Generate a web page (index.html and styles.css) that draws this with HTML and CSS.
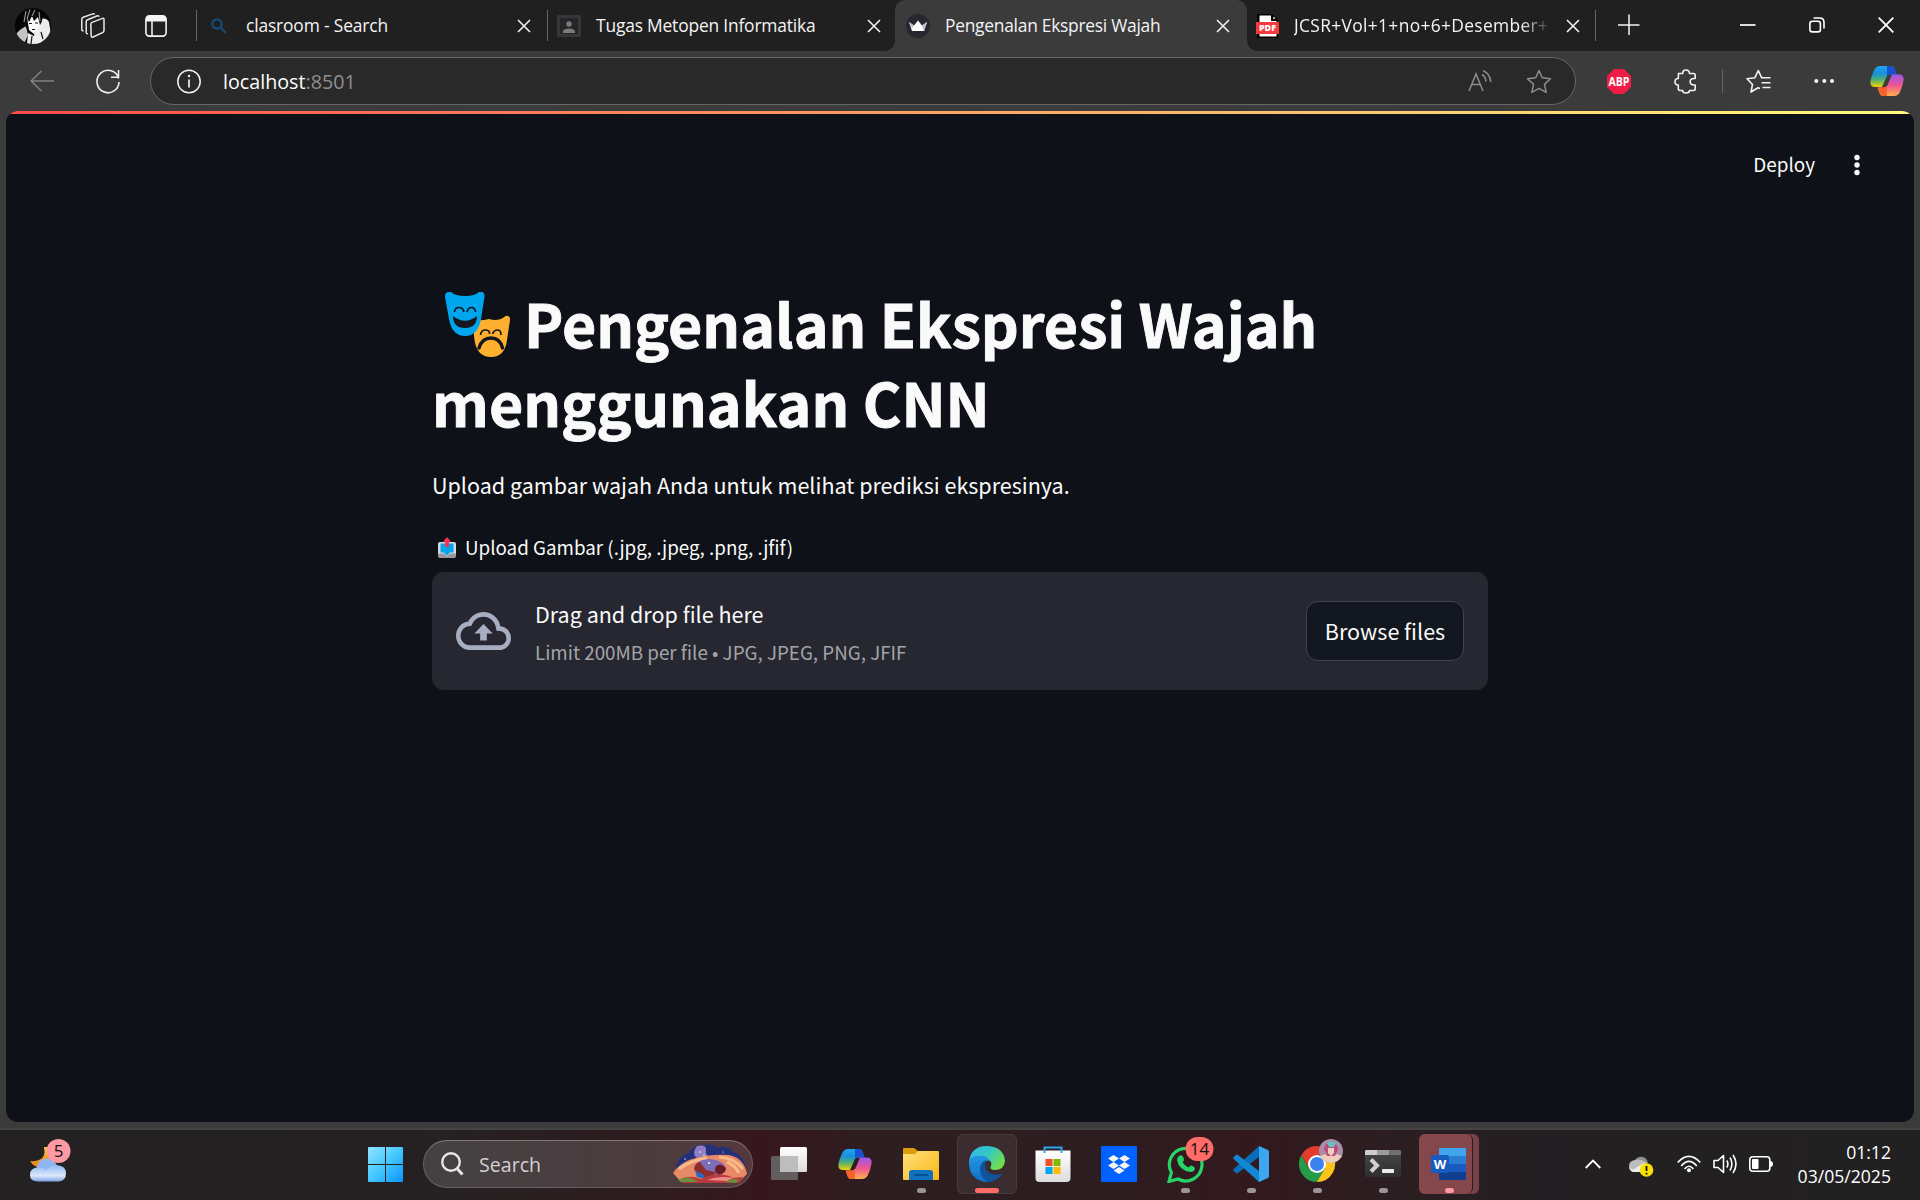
FILE: index.html
```html
<!DOCTYPE html>
<html lang="id">
<head>
<meta charset="utf-8">
<title>Pengenalan Ekspresi Wajah</title>
<link rel="stylesheet" href="styles.css">
</head>
<body>
<svg class="defs" aria-hidden="true">
  <defs>
    <linearGradient id="cpA" x1="0" y1="0" x2="0" y2="1"><stop offset="0" stop-color="#1fa3f0"/><stop offset=".35" stop-color="#1592dc"/><stop offset=".65" stop-color="#4fb070"/><stop offset="1" stop-color="#f5d000"/></linearGradient>
    <linearGradient id="cpB" x1="0" y1="0" x2="0" y2="1"><stop offset="0" stop-color="#9a57f0"/><stop offset=".5" stop-color="#ee5590"/><stop offset="1" stop-color="#ffb14a"/></linearGradient>
    <linearGradient id="win" x1="0" y1="0" x2="1" y2="1"><stop offset="0" stop-color="#8fe3ff"/><stop offset=".5" stop-color="#45c8ff"/><stop offset="1" stop-color="#0a93ff"/></linearGradient>
    <linearGradient id="cloud" x1="0" y1="0" x2="0" y2="1"><stop offset="0" stop-color="#8fb8f4"/><stop offset=".65" stop-color="#dbe8fb"/><stop offset="1" stop-color="#7ba3e4"/></linearGradient>
    <linearGradient id="moon" x1="0" y1="0" x2="0" y2="1"><stop offset="0" stop-color="#f9c83a"/><stop offset="1" stop-color="#ec7b12"/></linearGradient>
    <linearGradient id="fold" x1="0" y1="0" x2="1" y2="1"><stop offset="0" stop-color="#ffe07a"/><stop offset="1" stop-color="#f8b816"/></linearGradient>
    <linearGradient id="edgeTop" x1="0" y1="0" x2="1" y2=".6"><stop offset="0" stop-color="#35b5f0"/><stop offset=".5" stop-color="#35c6c8"/><stop offset="1" stop-color="#6fe04a"/></linearGradient>
    <linearGradient id="edgeL" x1="0" y1="0" x2="0" y2="1"><stop offset="0" stop-color="#2496e6"/><stop offset="1" stop-color="#0f6fc4"/></linearGradient>
    <linearGradient id="tv" x1="0" y1="0" x2="0" y2="1"><stop offset="0" stop-color="#fff"/><stop offset="1" stop-color="#dcdcdc"/></linearGradient>
    <linearGradient id="term" x1="0" y1="0" x2="0" y2="1"><stop offset="0" stop-color="#484848"/><stop offset="1" stop-color="#2f2f2f"/></linearGradient>
    <symbol id="x" viewBox="0 0 14 14"><path d="M1 1 13 13M13 1 1 13" fill="none" stroke="currentColor" stroke-width="1.6"/></symbol>
    <symbol id="copilot" viewBox="0 0 34 30">
      <path d="M10 0H20.500Q23.500 0 24.500 3L26.500 8.500H20Q17 8.500 16 12L12 21H5Q0 21 .4 15.500Q1 11 4 4.500Q6 0 10 0Z" fill="url(#cpA)"/>
      <path d="M17 0H20.500Q23.500 0 24.500 3L26.500 8.500H20Q18 8.500 17 10.500Z" fill="#1750d0"/>
      <path d="M24 30H13.500Q10.500 30 9.500 27L7.500 21.500H14Q17 21.500 18 18L22 8.500H29Q34 8.500 33.600 14Q33 19 30 26Q28 30 24 30Z" fill="url(#cpB)"/>
      <path d="M17 30H13.500Q10.500 30 9.500 27L7.500 21.500H14Q16 21.500 17 19.500Z" fill="#f5622c"/>
    </symbol>
  </defs>
</svg>

<header class="tabbar">
  <svg class="avatar" width="36" height="36" viewBox="0 0 36 36">
    <clipPath id="av"><circle cx="18" cy="18" r="18"/></clipPath>
    <g clip-path="url(#av)">
      <rect width="36" height="36" fill="#050505"/>
      <path d="M23 12Q31 8 34 14L36 26 30 36H22L19 26Z" fill="#ececec"/>
      <path d="M0 27Q5 21 11 18L13 27 9 36H3Z" fill="#c4c4c4"/>
      <path d="M12 9 25 8 24 19 19 26 14 22Z" fill="#fafafa"/>
      <path d="M13 25 19 28 24 22 27 36H12Z" fill="#ededed"/>
      <path d="M8 5Q17-3 26 6Q29 12 25 17L23 9 19 13 17 8 14 14 12 10 12 21Q7 14 8 5Z" fill="#0a0a0a"/>
      <path d="M11 3 9 14M15 1.500 12 11M20 2 17 8M24 4 25 13" stroke="#aaa" stroke-width="1"/>
      <path d="M14 15.500H17M20 15H23M17 21.500H20M17 28 16 36M26 24 28 31" stroke="#111" stroke-width="1.200"/>
    </g>
  </svg>
  <svg class="workspaces" width="26" height="26" viewBox="0 0 26 26" fill="none" stroke="#e8e8e8" stroke-width="1.500" stroke-linejoin="round">
    <path d="M10.800 11.200Q10.800 9.800 12 9.400L22.500 5.400Q24 4.900 24 6.500V17.500Q24 19 22.600 19.600L13 24Q11.400 24.700 11.200 23Z"/>
    <path d="M8 20.800Q6.200 21 6.200 19.300V8.800Q6.200 7.200 7.500 6.700L17.500 2.800Q18.700 2.400 19.200 3.800"/>
    <path d="M3.600 17.800Q1.800 18 1.800 16.400V6.300Q1.800 4.800 3.200 4.200L12.800.9Q14 .5 14.600 1.500"/>
  </svg>
  <svg class="verttabs" width="22" height="22" viewBox="0 0 22 22"><rect x=".9" y=".9" width="20.200" height="20.200" rx="3.500" fill="none" stroke="#f4f4f4" stroke-width="1.600"/><path d="M1 6.500V4Q1 1 4 1H18Q21 1 21 4V6.500Z" fill="#f4f4f4"/><path d="M7 6V21" stroke="#f4f4f4" stroke-width="1.500"/></svg>
  <i class="sep"></i>
  <div class="tab tab-a">
    <svg width="16" height="16" viewBox="0 0 16 16" fill="none" stroke="#174a75" stroke-width="2.200"><circle cx="6" cy="6" r="4.700"/><path d="M9.500 9.500 15 15"/></svg>
    <span class="t t1">clasroom - Search</span>
    <svg class="close" width="14" height="14"><use href="#x"/></svg>
  </div>
  <i class="sep"></i>
  <div class="tab tab-b">
    <svg width="24" height="22" viewBox="0 0 24 22"><rect width="24" height="22" rx="2" fill="#35373a"/><rect x="3" y="3" width="18" height="16" fill="#242628"/><circle cx="12" cy="9" r="2.700" fill="#7b7b7b"/><path d="M6 18V16Q7 13.500 12 13.500T18 16V18Z" fill="#7b7b7b"/></svg>
    <span class="t t2">Tugas Metopen Informatika</span>
    <svg class="close" width="14" height="14"><use href="#x"/></svg>
  </div>
  <div class="tab tab-active">
    <svg width="24" height="24" viewBox="0 0 24 24"><circle cx="12" cy="12" r="12" fill="#262730"/><path d="M3 8 8 11.500 12 6.500 16 11.500 21 8 18 17H6Z" fill="#fff"/><path d="M21 8 16 11.500 18 17ZM3 8 8 11.500 6 14Z" fill="#b9b9c0"/></svg>
    <span class="t t3">Pengenalan Ekspresi Wajah</span>
    <svg class="close" width="14" height="14"><use href="#x"/></svg>
  </div>
  <div class="tab tab-d">
    <svg width="23" height="24" viewBox="0 0 23 24"><path d="M1 0H16L22 6V24H1Z" fill="#000"/><path d="M3.500 1.500H15V7H20.500V22.500H3.500Z" fill="#fff"/><circle cx="18" cy="4" r="1" fill="#ddd"/><rect y="8" width="23" height="12" fill="#f5393c"/><text x="11.500" y="17.200" class="pdf" textLength="17">PDF</text></svg>
    <span class="t t4">JCSR+Vol+1+no+6+Desember+</span>
    <svg class="close" width="14" height="14"><use href="#x"/></svg>
  </div>
  <i class="sep"></i>
  <svg class="plus" width="22" height="22" viewBox="0 0 22 22"><path d="M0 11H21.500M11 .5V21" stroke="#f2f2f2" stroke-width="1.500"/></svg>
  <div class="winctl">
    <svg width="16" height="16" viewBox="0 0 16 16"><path d="M0 8H15.500" stroke="#fff" stroke-width="1.700"/></svg>
    <svg width="16" height="16" viewBox="0 0 16 16" fill="none" stroke="#fff" stroke-width="1.600"><rect x=".9" y="4.200" width="10.500" height="10.700" rx="2.500"/><path d="M4.500 1H10.500Q15 1 15 5.500V11.500"/></svg>
    <svg width="16" height="16" viewBox="0 0 16 16"><path d="M.7.7 15.300 15.300M15.300.7.7 15.300" stroke="#fff" stroke-width="1.800"/></svg>
  </div>
</header>

<nav class="toolbar">
  <svg class="back" width="24" height="22" viewBox="0 0 24 22" fill="none" stroke="#838383" stroke-width="1.500"><path d="M24 11H1M11.500 1 1 11 11.500 21"/></svg>
  <svg class="reload" width="24" height="25" viewBox="0 0 24 25" fill="none" stroke="#f0f0f0" stroke-width="1.600"><path d="M22.600 9.500A11 11.200 0 1 0 23 13M22.500 1V8.200H15"/></svg>
  <div class="omnibox">
    <svg class="info" width="24" height="25" viewBox="0 0 24 25"><circle cx="12" cy="12.500" r="11.200" fill="none" stroke="#f2f2f2" stroke-width="1.500"/><path d="M12 10.500V18.500" stroke="#f2f2f2" stroke-width="1.700"/><circle cx="12" cy="7" r="1.200" fill="#f2f2f2"/></svg>
    <span class="url"><span class="host">localhost</span><span class="port">:8501</span></span>
    <svg class="read" width="24" height="22" viewBox="0 0 24 22" fill="none" stroke="#8d8d8d" stroke-width="1.500"><path d="M1 21 8 4 15 21M3.700 14.500H12.300M14 4.500Q17.500 6.500 18 11.500M15 .8Q22 3.500 22.800 12"/></svg>
    <svg class="star" width="26" height="25" viewBox="0 0 26 25" fill="none" stroke="#8d8d8d" stroke-width="1.500" stroke-linejoin="round"><path d="M13 1.500 16.300 8.800 24.500 9.700 18.500 15.300 20.200 23.300 13 19.300 5.800 23.300 7.500 15.300 1.500 9.700 9.700 8.800Z"/></svg>
  </div>
  <svg class="abp" width="24" height="25" viewBox="0 0 24 25"><path d="M7 0H17L24 7V18L17 25H7L0 18V7Z" fill="#ee1c46"/><text x="12" y="16.800" textLength="21" lengthAdjust="spacingAndGlyphs">ABP</text></svg>
  <svg class="puzzle" width="24" height="25" viewBox="0 0 24 25" fill="none" stroke="#f2f2f2" stroke-width="1.600" stroke-linejoin="round"><path d="M4.500 4.500H8.700Q8.700 1 12 1T15.500 4.500H19.500Q21.200 4.500 21.200 6.200V9.500H20Q16.200 9.500 16.200 12.700T20 16H21.200V19.800Q21.200 21.500 19.500 21.500H15.500Q15.500 24 12 24T8.700 21.500H6Q4.300 21.500 4.300 19.800V16Q1 16 1 12.700T4.300 9.500Z"/></svg>
  <i class="tsep"></i>
  <svg class="favs" width="25" height="25" viewBox="0 0 25 25" fill="none" stroke="#f2f2f2" stroke-width="1.600" stroke-linejoin="round"><path d="M14 19.600 12 18.800 5 23 6.500 15.500 1 9.800 8.800 8.800 12.300 1.500 15.700 8.800H24.500M15.500 13.700H24.500M16.500 18.500H24.500"/></svg>
  <svg class="more" width="20" height="6" viewBox="0 0 20 6" fill="#f4f4f4"><circle cx="2.300" cy="3" r="2"/><circle cx="10.300" cy="3" r="2"/><circle cx="18" cy="3" r="2"/></svg>
  <svg class="cp" width="34" height="30"><use href="#copilot"/></svg>
</nav>

<div class="frame">
  <main class="page">
    <div class="rainbow"></div>
    <div class="apphead">
      <span class="deploy">Deploy</span>
      <svg width="6" height="22" viewBox="0 0 6 22" fill="#fafafa"><circle cx="3" cy="3.500" r="2.700"/><circle cx="3" cy="11" r="2.700"/><circle cx="3" cy="18.500" r="2.700"/></svg>
    </div>
    <section class="block">
      <h1>
        <span class="line"><svg class="masks" width="66" height="66" viewBox="0 0 66 66">
          <path d="M44 27Q54 30 60.500 24Q65.500 23 65 28L62 48Q60 65 46 65T29.500 48L27 27Q34 29.500 44 27Z" fill="#ffb02e"/>
          <path d="M35.500 43Q36 38 40.500 38T44.500 42M47.500 42Q49 38 52.500 38T56 43" fill="none" stroke="#14171f" stroke-width="1.700"/>
          <path d="M34 56Q37 46 46 46T57.500 56" fill="none" stroke="#14171f" stroke-width="3.400" stroke-linecap="round"/>
          <path d="M0 5Q0-1 6 0Q10 4 20 4T34 0Q40-1 39.500 5L36 27Q33 44 20 44T4 27Z" fill="#00a6ed"/>
          <path d="M9.500 20Q10 15.500 14 15.500T19 20M22 20Q23 15.500 26.500 15.500T30.500 20" fill="none" stroke="#14171f" stroke-width="1.700"/>
          <path d="M8 24Q20 33.500 32 24Q32 36 20 36T8 24Z" fill="#14171f"/>
        </svg><span>Pengenalan Ekspresi Wajah</span></span>
        <span class="line">menggunakan CNN</span>
      </h1>
      <p class="lead">Upload gambar wajah Anda untuk melihat prediksi ekspresinya.</p>
      <div class="label">
        <svg width="18" height="21" viewBox="0 0 18 21"><path d="M0 7Q0 5 2 5H16Q18 5 18 7V18Q18 21 15 21H3Q0 21 0 18Z" fill="#d9d9dc"/><path d="M0 16.500H6L9 19 12 16.500H18V18Q18 21 15 21H3Q0 21 0 18Z" fill="#98989c"/><path d="M2.500 6.500H15.500V15.500H12L9 18.500 6 15.500H2.500Z" fill="#00a6ed"/><path d="M9 0 13 4.500H11V10H7V4.500H5Z" fill="#f8314f"/></svg>
        <span>Upload Gambar (.jpg, .jpeg, .png, .jfif)</span>
      </div>
      <div class="dropzone">
        <svg class="cloud" width="56" height="38" viewBox="0 4 24 16" preserveAspectRatio="none" fill="#a8aec2"><path d="M19.350 10.040A7.490 7.490 0 0 0 12 4C9.110 4 6.600 5.640 5.350 8.040A5.994 5.994 0 0 0 0 14c0 3.310 2.690 6 6 6h13c2.760 0 5-2.240 5-5 0-2.640-2.050-4.780-4.650-4.960zM19 18H6c-2.210 0-4-1.790-4-4 0-2.050 1.530-3.760 3.560-3.970l1.070-.110.5-.950A5.469 5.469 0 0 1 12 6c2.620 0 4.880 1.860 5.390 4.430l.3 1.500 1.530.110A2.980 2.980 0 0 1 22 15c0 1.650-1.350 3-3 3zM8 13h2.550v3h2.900v-3H16l-4-4z"/></svg>
        <div class="dz">
          <span class="dz1">Drag and drop file here</span>
          <span class="dz2">Limit 200MB per file • JPG, JPEG, PNG, JFIF</span>
        </div>
        <button class="browse">Browse files</button>
      </div>
    </section>
  </main>
</div>

<footer class="taskbar">
  <svg class="weather" width="44" height="46" viewBox="0 0 44 46">
    <path d="M14 8Q16 18 10 20.500Q5 23 0 22Q4 29 12 29L24 22 22 8Z" fill="url(#moon)"/>
    <circle cx="17" cy="30" r="10.500" fill="#8db5f2"/><path d="M0 36Q0 28.500 8 28.500Q13 28 16 31Q20 26 27 26Q36 27 36 34Q36 42.500 28 42.500H8Q0 42.500 0 36Z" fill="url(#cloud)"/>
    <circle cx="28.500" cy="12" r="12" fill="#ff99a4"/><text x="28.500" y="17.700" class="badge">5</text>
  </svg>
  <svg class="start" width="35" height="35" viewBox="0 0 35 35"><path d="M1 0H17V17H0V1Q0 0 1 0ZM18 0H34Q35 0 35 1V17H18ZM0 18H17V35H1Q0 35 0 34ZM18 18H35V34Q35 35 34 35H18Z" fill="url(#win)"/></svg>
  <div class="search">
    <svg class="glass" width="23" height="24" viewBox="0 0 23 24" fill="none" stroke="#e6e6e6" stroke-width="2.400"><circle cx="10" cy="10" r="8.800"/><path d="M16 16.500 21.500 22.500" stroke-width="3"/></svg>
    <span class="ms">Search</span>
    <svg class="art" width="74" height="40" viewBox="0 0 74 40">
      <path d="M3 25Q4 12 16 9Q20 1 31 1Q40-1 45 4Q56 1 60 8Q71 11 73 26Z" fill="#24307c"/>
      <path d="M24 2Q34 0 33 7Q32 11 38 13L24 14Q18 10 24 2Z" fill="#8f7cc4"/>
      <path d="M0 29Q6 20 16 16Q34 10 56 11Q71 14 74 30L66 38H8Z" fill="#e88a66"/>
      <path d="M6 25Q18 16 34 14M46 13Q62 14 70 25M54 18Q62 21 66 29" stroke="#f8bb8a" stroke-width="3" fill="none"/>
      <path d="M21 25Q22 16 36 15Q52 16 53 26Q50 32 36 31Q25 32 21 25Z" fill="#7d6cb8"/>
      <path d="M21 25Q22 19 27 18L33 26 43 28 40 32 28 34Z" fill="#8f2f2c"/>
      <path d="M43 22Q48 18 53 24Q53 29 46 31Q40 28 43 22Z" fill="#6b1a24"/>
      <path d="M22 27 30 30 33 35 24 33Z" fill="#2c68c0"/>
      <path d="M6 36Q16 30 28 35Q46 26 60 34L70 33 66 39H10Z" fill="#b93a3e"/><path d="M34 36Q46 31 60 34L54 37Z" fill="#ef8c88"/>
      <path d="M5 36Q14 30 25 38H8ZM52 38Q58 33 66 36L62 39Z" fill="#6d8f38"/>
      <g fill="#fff"><circle cx="27" cy="8" r=".8"/><circle cx="36" cy="19" r=".9"/><circle cx="50" cy="8" r=".6"/><circle cx="12" cy="15" r=".7"/><circle cx="31" cy="11" r=".7"/></g>
    </svg>
  </div>
  <div class="apps">
    <div class="app"><svg width="36" height="36" viewBox="0 0 36 36"><rect x="9" y="1" width="27" height="25" rx="1.500" fill="url(#tv)"/><rect y="10" width="27" height="24" rx="1.500" fill="#6c6c6c" opacity=".82"/><path d="M9 10H27V26H9Z" fill="#bdbdbd"/></svg></div>
    <div class="app"><svg width="34" height="30"><use href="#copilot"/></svg></div>
    <div class="app"><svg width="36" height="34" viewBox="0 0 36 34"><path d="M0 2Q0 1 1 1H11L15 4V8H0Z" fill="#dd9d0b"/><path d="M0 7H12L15 4H35Q36 4 36 5V32Q36 33 35 33H1Q0 33 0 32Z" fill="url(#fold)"/><path d="M6 33V26Q6 23 9 23H27Q30 23 30 26V33Z" fill="#0f72c0"/><path d="M11 28H25" stroke="#0a4f92" stroke-width="2"/></svg><i></i></div>
    <div class="app on"><svg width="36" height="36" viewBox="0 0 36 36">
      <path d="M0 17Q1 0 18 0Q35 1 36 15Q35 24 26 24Q21 24 21.500 21Q24 17 20 14Q14 9 6 12Z" fill="url(#edgeTop)"/>
      <path d="M0 19Q-.500 10 9 10Q18 9 21 15Q15 14 14 20Q14 28 23 35Q18 37 12 35Q1 31 0 19Z" fill="url(#edgeL)"/>
      <path d="M17 14Q10 17 11 25Q13 34 20 36Q29 35 33.500 27Q28 30 23 28Q14 25 17 14Z" fill="#10539c"/>
      </svg><i></i></div>
    <div class="app"><svg width="36" height="36" viewBox="0 0 36 36"><path d="M.500 4.500H35.500V32Q35.500 36 31.500 36H4.500Q.500 36 .500 32Z" fill="url(#tv)"/><path d="M9.500 7V1.500H26.500V7" fill="none" stroke="#28a8ea" stroke-width="2"/><path d="M10.500 13H17.500V20H10.500Z" fill="#f25022"/><path d="M18.500 13H25.500V20H18.500Z" fill="#7fba00"/><path d="M10.500 21H17.500V28H10.500Z" fill="#00a4ef"/><path d="M18.500 21H25.500V28H18.500Z" fill="#ffb900"/></svg></div>
    <div class="app"><svg width="36" height="36" viewBox="0 0 36 36"><rect width="36" height="36" fill="#0061fe"/><path d="M12.500 9 18 12.500 12.500 16 7 12.500ZM23.500 9 29 12.500 23.500 16 18 12.500ZM12.500 16 18 19.500 12.500 23 7 19.500ZM23.500 16 29 19.500 23.500 23 18 19.500ZM18 21 23.500 24.500 18 28 12.500 24.500Z" fill="#f7f5f2"/></svg></div>
    <div class="app"><svg class="wa" width="48" height="46" viewBox="0 0 48 46"><path d="M2 44.500 4.400 35.500A16.300 16.300 0 1 1 11 42Z" fill="none" stroke="#25d366" stroke-width="3.200"/><path d="M12 19Q14.500 17 16.200 20L17 22.500Q17 24 15.500 25Q17.500 29 21.500 30.500L23.500 28.500Q26 28 28 31Q27.500 35 23.500 35Q12 33.500 10 23Q10 20.500 12 19Z" fill="#25d366"/><rect x="18.500" y="0" width="28" height="24" rx="12" fill="#ff6b66"/><text x="32.500" y="17.800" class="badge">14</text></svg><i></i></div>
    <div class="app"><svg width="36" height="36" viewBox="0 0 36 36"><path d="M26 0 35 4Q36 4.500 36 6V30Q36 31.500 35 32L26 36Z" fill="#3aa7ee"/><path d="M26 0V11L5 27Q4 28 3 27L.7 25Q-.500 24 .7 23Z" fill="#0a6db8"/><path d="M26 36V25L5 9Q4 8 3 9L.7 11Q-.500 12 .7 13Z" fill="#1287d4"/></svg><i></i></div>
    <div class="app"><svg class="chrome" width="44" height="43" viewBox="0 0 44 43">
      <path d="M2.400 16A18 18 0 0 0 18 43L26 29.500 18 25 10.200 29.500Z" fill="#259a48"/><path d="M33.600 16A18 18 0 0 1 18 43L25.800 29.500V16Z" fill="#fcc31a"/><path d="M2.400 16A18 18 0 0 1 33.600 16H18L10.300 29.600Z" fill="#e33b2e"/>
      <circle cx="18" cy="25" r="9" fill="#fff"/><circle cx="18" cy="25" r="7" fill="#3b82f0"/>
      <circle cx="32" cy="12" r="12" fill="#a88fa8"/><path d="M21 17Q32 12 43 17Q38 24 32 24T21 17Z" fill="#f0cdbb"/><path d="M25 10Q26 3 32 3T39 10L36 17H28Z" fill="#c04a7c"/><path d="M29 9H35V14L32 17 29 14Z" fill="#f0cfc0"/><path d="M28 4 30 8H35L37 4Q32 1 28 4Z" fill="#63c2c2"/></svg><i></i></div>
    <div class="app"><svg width="36" height="28" viewBox="0 0 36 28"><rect width="36" height="27" rx="1.500" fill="url(#term)"/><path d="M1 0H12V5H0V1Z" fill="#cfcfcf"/><path d="M12 0H24V5H12Z" fill="#9c9c9c"/><path d="M24 0H35L36 1V5H24Z" fill="#707070"/><path d="M6 9.500 12 15.500 6 21.500" fill="none" stroke="#d0d0d0" stroke-width="4"/><rect x="17" y="19" width="12" height="4" rx=".7" fill="#ececec"/></svg><i></i></div>
    <div class="app word"><svg width="36" height="32" viewBox="0 0 36 32"><path d="M8 1Q8 0 9 0H35V8H8Z" fill="#41a5ee"/><path d="M8 8H35V16H8Z" fill="#2b7cd3"/><path d="M8 16H35V24H8Z" fill="#185abd"/><path d="M8 24H35V32H9Q8 32 8 31Z" fill="#103f91"/><rect y="7" width="18" height="18" rx="1.500" fill="#185abd"/><text x="9" y="20.500" class="w">W</text></svg><i></i></div>
  </div>
  <div class="tray">
    <svg class="chev" width="16" height="10" viewBox="0 0 16 10" fill="none" stroke="#fff" stroke-width="1.800"><path d="M.7 9 8 1.500 15.300 9"/></svg>
    <svg class="onedrive" width="25" height="22" viewBox="0 0 25 22"><path d="M6 5Q9 1 14 2Q18 3 19 8L8 15Z" fill="#8f8f8f"/><path d="M6 5Q0 6 0 11T5 17H12L18 8Q12 3 6 5Z" fill="#bdbdbd"/><path d="M0 12Q3 17 8 12L15 8 14 17H5Q1 17 0 12Z" fill="#ededed"/><circle cx="17.500" cy="15" r="6.800" fill="#fbe100"/><path d="M17.500 11V16M17.500 17.700V19.500" stroke="#111" stroke-width="1.800"/></svg>
    <svg class="wifi" width="24" height="18" viewBox="0 0 24 18" fill="none" stroke="#fff" stroke-width="1.700"><path d="M.7 7.500Q12-4.800 23.300 7.500M4.200 11Q12 1.800 19.800 11M7.600 14Q12 8.500 16.400 14"/><circle cx="12" cy="15.300" r="2" fill="#fff" stroke="none"/></svg>
    <svg class="vol" width="25" height="20" viewBox="0 0 25 20" fill="none" stroke="#fff" stroke-width="1.600" stroke-linejoin="round"><path d="M1 6.500H5L10.500 1.500V18.500L5 13.500H1ZM13.800 6.500Q16 10 13.800 13.500M17 3.500Q20.800 10 17 16.500M20 1Q26 10 20 19"/></svg>
    <svg class="bat" width="25" height="16" viewBox="0 0 25 16"><rect x=".8" y=".8" width="20" height="14.400" rx="3" fill="none" stroke="#fff" stroke-width="1.600"/><rect x="3" y="3" width="6.500" height="10" rx="1" fill="#fff"/><path d="M21 5Q24 5 24 8T21 11Z" fill="#fff"/></svg>
    <div class="clock"><span>01:12</span><span>03/05/2025</span></div>
  </div>
</footer>
</body>
</html>
```
FILE: styles.css
```css
* { box-sizing: border-box; }
body {
  margin: 0; width: 1920px; height: 1200px; overflow: hidden;
  display: flex; flex-direction: column;
  background: #3b3b3b; color: #fff;
  font-family: "Open Sans", "Noto Sans", sans-serif;
}
svg { display: block; flex: none; }
.defs { position: absolute; width: 0; height: 0; }

/* tab strip */
.tabbar { height: 51px; flex: none; display: flex; align-items: center; background: #202020; }
.avatar { margin-left: 15px; }
.workspaces { margin-left: 29px; }
.verttabs { margin-left: 39px; }
.verttabs + .sep { margin-left: 29px; }
.sep { width: 1px; height: 31px; background: #666; flex: none; }
.tab { height: 51px; display: flex; align-items: center; flex: none; }
.tab-a { width: 350px; padding: 0 16px 0 14px; }
.tab-b { width: 347px; padding: 0 14px 0 9px; }
.tab-active { width: 352px; padding: 0 17px 0 11px; background: #3b3b3b; border-radius: 10px 10px 0 0; position: relative; }
.tab-active::before, .tab-active::after { content: ""; position: absolute; bottom: 0; width: 10px; height: 10px; }
.tab-active::before { left: -10px; background: radial-gradient(circle at 0 0, transparent 9.5px, #3b3b3b 10px); }
.tab-active::after { right: -10px; background: radial-gradient(circle at 100% 0, transparent 9.5px, #3b3b3b 10px); }
.tab-d { width: 348px; padding: 0 15px 0 9px; }
.t { font-size: 17.400px; line-height: 24px; padding-bottom: 1px; white-space: nowrap; color: #f4f4f4; }
.tab .close { margin-left: auto; color: #f0f0f0; }
.t1 { margin-left: 19px; letter-spacing: -.150px; }
.t2 { margin-left: 15px; letter-spacing: -.180px; }
.t3 { margin-left: 15px; letter-spacing: -.260px; }
.t4 { margin-left: 15px; width: 258px; letter-spacing: .340px; -webkit-mask-image: linear-gradient(90deg, #000 88%, transparent); mask-image: linear-gradient(90deg, #000 88%, transparent); }
.pdf { font: 800 9px "Open Sans", sans-serif; fill: #fff; text-anchor: middle; }
.plus { margin: 0 0 2px 22px; }
.winctl { margin: 0 0 1px 100px; display: flex; gap: 53px; align-items: center; }

/* address bar */
.toolbar { height: 60px; flex: none; display: flex; align-items: center; background: #3b3b3b; }
.back { margin-left: 30px; }
.reload { margin-left: 42px; }
.omnibox { margin-left: 30px; width: 1426px; height: 48px; display: flex; align-items: center; background: #292929; border: 1px solid #666; border-radius: 24px; }
.info { margin-left: 26px; }
.url { margin-left: 22px; flex: 1; font-size: 19.700px; line-height: 26px; padding-top: 1px; }
.port { color: #8f8f8f; }
.read { margin-right: 34px; }
.star { margin-right: 23px; }
.abp { margin-left: 31px; }
.abp text { font: 700 11.500px "Open Sans", sans-serif; fill: #fff; text-anchor: middle; }
.puzzle { margin-left: 43px; }
.tsep { margin-left: 24px; width: 1px; height: 24px; background: #666; }
.favs { margin-left: 23px; }
.more { margin-left: 43px; }
.cp { margin-left: 36px; }

/* page */
.frame { height: 1017px; flex: none; padding: 0 6px 6px; background: #3b3b3b; }
.page { height: 1011px; overflow: hidden; border-radius: 12px; background: #0e1117; color: #fafafa; font-family: "Noto Sans CJK JP", sans-serif; }
.rainbow { height: 3px; background: linear-gradient(90deg, #ff4b4b, #fffd80); }
.apphead { height: 102px; display: flex; align-items: center; justify-content: flex-end; gap: 39px; padding-right: 54px; }
.deploy { font-size: 18.900px; line-height: 30px; padding-bottom: 2px; }
.block { width: 1056px; margin: 67px auto 0; }
h1 { margin: 0; font-size: 59px; font-weight: 700; -webkit-text-stroke: .9px #fafafa; }
.line { display: flex; height: 79px; line-height: 79px; white-space: nowrap; }
.masks { margin: 9px 13px 0 13px; }
.lead { margin: 25px 0 0; font-size: 21.530px; line-height: 38px; }
.label { margin-top: 28px; height: 30px; display: flex; align-items: center; gap: 9px; padding-left: 6px; font-size: 18.800px; }
.label span { padding-bottom: 1px; }
.dropzone { margin-top: 10px; height: 118px; padding: 0 24px; display: flex; align-items: center; border-radius: 12px; background: #262730; }
.cloud { width: 55px; }
.dz { margin-left: 24px; padding-top: 3px; display: flex; flex-direction: column; flex: 1; }
.dz1 { font-size: 21.530px; line-height: 38px; }
.dz2 { font-size: 18.800px; line-height: 38px; color: #a3a4a8; }
.browse { width: 158px; height: 60px; padding: 0 0 2px; border: 1px solid #41444c; border-radius: 12px; background: #131720; color: #fafafa; font: 21.530px "Noto Sans CJK JP", sans-serif; }

/* taskbar */
.taskbar {
  height: 72px; flex: none; display: flex; align-items: center; padding-bottom: 2px; border-top: 2px solid #454444;
  background: linear-gradient(90deg, #232122 0, #252122 420px, #2e1c1f 640px, #37171d 760px, #2d1e20 880px, #2d1d20 1100px, #33191e 1250px, #2b1e21 1400px, #231f22 1550px, #222122 1920px);
}
.weather { margin: -4px 0 0 30px; }
.start { margin: 1px 0 0 294px; }
.search { margin-left: 20px; width: 330px; height: 48px; display: flex; align-items: center; padding-left: 17px; border: 1px solid rgba(255,255,255,.18); border-top-color: rgba(255,255,255,.3); border-radius: 24px; background: rgba(255,255,255,.145); color: #d2d0d1; font-size: 19.600px; }
.ms { margin-left: 15px; }
.art { margin: 0 5px 0 auto; }
.apps { margin-left: 3px; display: grid; grid-template-columns: repeat(11, 66px); }
.app { height: 60px; width: 60px; justify-self: center; display: grid; place-items: center; position: relative; border-radius: 6px; }
.app svg { position: relative; }
.app i { position: absolute; left: 25.500px; bottom: 1px; width: 9px; height: 5px; border-radius: 2.500px; background: #9c9597; }
.app.on { background: rgba(255,255,255,.07); box-shadow: inset 0 0 0 1px rgba(255,255,255,.07); }
.app.on i { left: 18px; width: 24px; background: #ff6b66; }
.app.word { background: #77404a; }
.app.word::before { content: ""; position: absolute; inset: 0 6px 0 0; border-radius: 6px; border-right: 1.500px solid #2a1b1e; background: #84474c; }
.app.word i { background: #ff99a4; }
.wa { margin: -9px -11px 0 0; }
.chrome { margin: -7px -8px 0 0; }
.badge { font: 17px "Open Sans", sans-serif; fill: #111; text-anchor: middle; }
.w { font: 700 13px "Open Sans", sans-serif; fill: #fff; text-anchor: middle; }
.tray { margin-left: 103px; display: flex; align-items: center; }
.onedrive { margin: 3px 0 0 28px; }
.wifi { margin-left: 23px; }
.vol { margin-left: 12px; }
.bat { margin-left: 11px; }
.clock { margin-left: 20px; width: 97px; display: flex; flex-direction: column; align-items: flex-end; font-size: 17.600px; line-height: 24px; }
```
